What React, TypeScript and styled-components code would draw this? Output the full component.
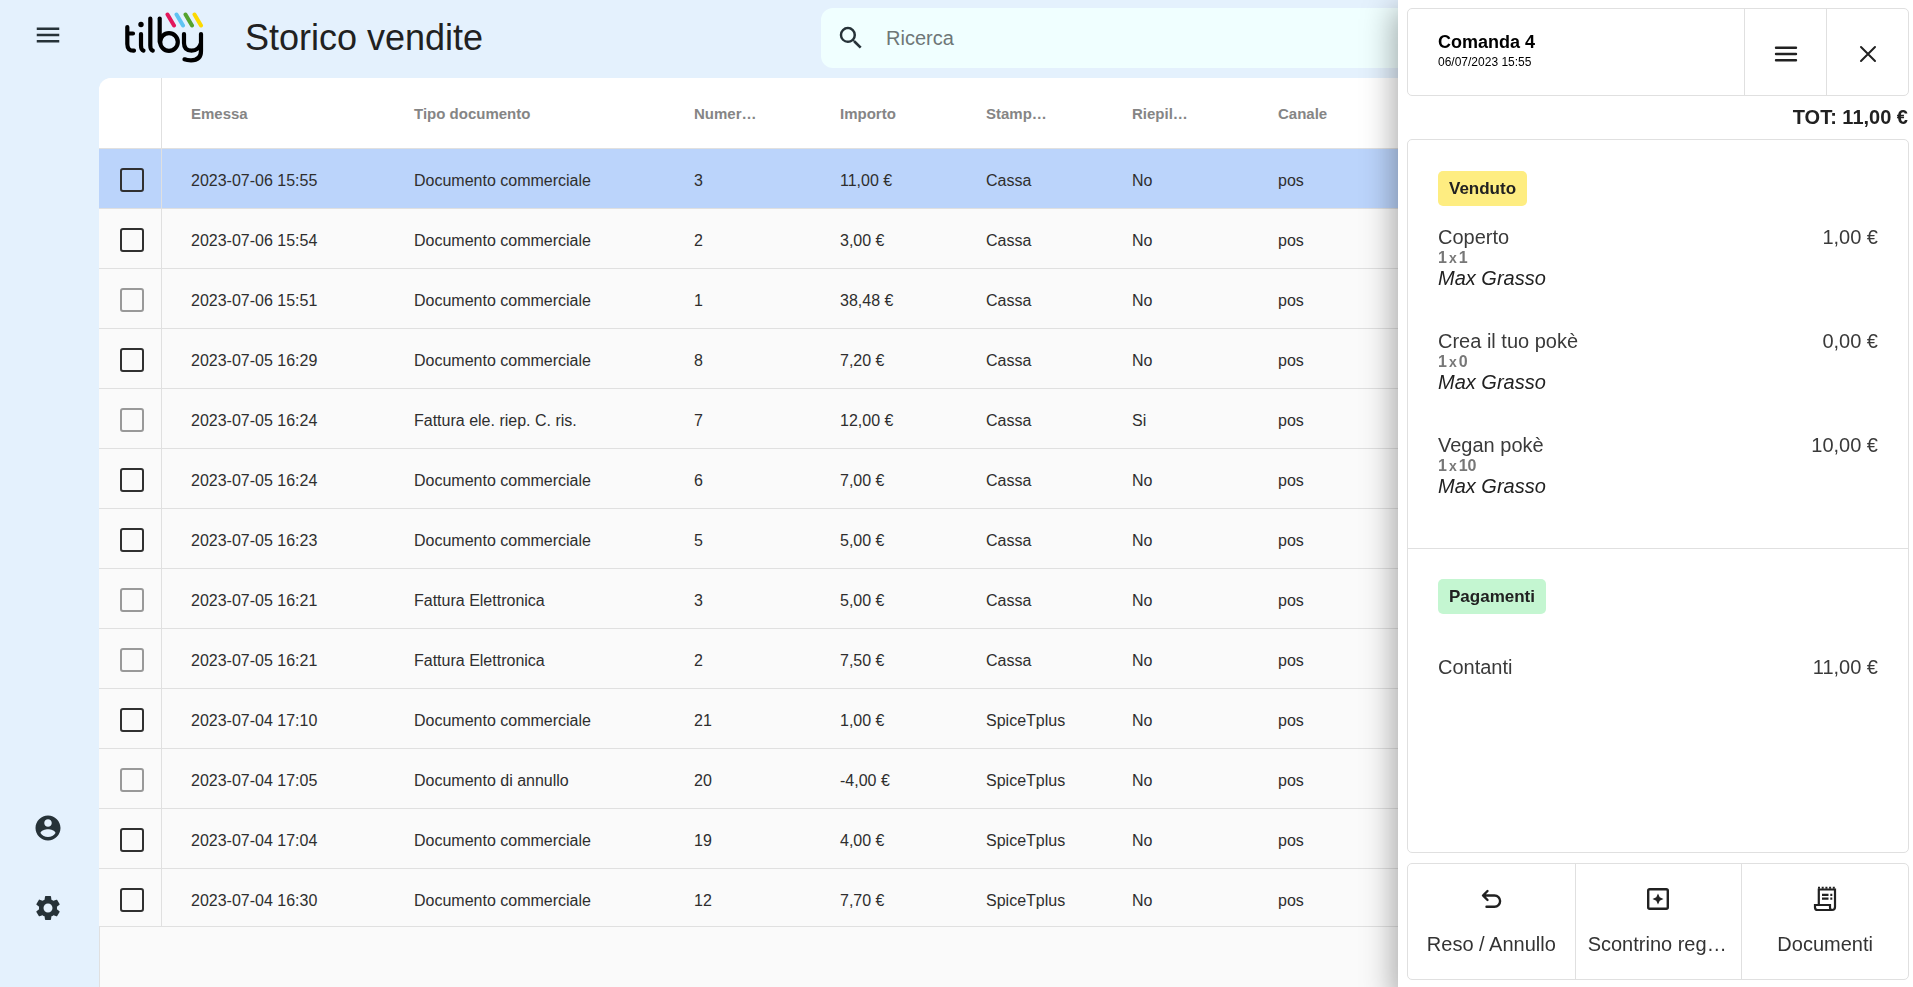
import React from 'react';
import styled, { createGlobalStyle } from 'styled-components';

const Global = createGlobalStyle`
  *, *::before, *::after { box-sizing: border-box; }
  body { margin: 0; background: #e4f1fd; color: #212121; }
  body, button, input { font-family: "Liberation Sans", Arial, sans-serif; }
`;

const Page = styled.div`
  display: grid;
  grid-template-columns: 99px minmax(0, 1fr);
  height: 100vh;
  overflow: hidden;
`;

const Sidebar = styled.nav`
  display: flex;
  flex-direction: column;
  align-items: center;
  padding: 15px 3px 59px 0;
  gap: 40px;
`;

const IconButton = styled.button`
  display: flex;
  align-items: center;
  justify-content: center;
  width: 40px;
  height: 40px;
  padding: 0;
  border: 0;
  background: none;
  color: #263238;
  cursor: pointer;
`;

const Spacer = styled.div`
  flex: 1;
`;

const Main = styled.main`
  display: flex;
  flex-direction: column;
  min-width: 0;
`;

const TopBar = styled.header`
  display: flex;
  align-items: center;
  flex: none;
  height: 78px;
  padding: 0 24px;
`;

const Title = styled.h1`
  flex: none;
  width: 577px;
  margin: 0 0 2px;
  padding-left: 1px;
  font-size: 36px;
  font-weight: 400;
  line-height: 44px;
`;

const Search = styled.label`
  display: flex;
  align-items: center;
  flex: 1;
  height: 60px;
  margin-bottom: 2px;
  padding: 0 16px 0 15px;
  gap: 20px;
  border-radius: 12px;
  background: #f0ffff;
  color: #263238;
`;

const SearchInput = styled.input`
  flex: 1;
  min-width: 0;
  padding: 0;
  border: 0;
  outline: 0;
  background: none;
  font-size: 20px;
  line-height: 24px;
  &::placeholder { color: #6e7777; opacity: 1; }
`;

const TableArea = styled.section`
  display: flex;
  flex-direction: column;
  flex: 1;
  min-height: 0;
  overflow: hidden;
  border-top-left-radius: 12px;
  background: #fafafa;
`;

const TableRest = styled.div`
  flex: 1;
  border-left: 1px solid #e0e0e0;
`;

const Table = styled.table`
  width: 100%;
  border-collapse: separate;
  border-spacing: 0;
  table-layout: fixed;
`;

const HeadCell = styled.th<{ $w?: number }>`
  width: ${(p) => (p.$w ? `${p.$w}px` : 'auto')};
  height: 71px;
  padding: 0 53px 0 29px;
  overflow: hidden;
  border-bottom: 1px solid #e0e0e0;
  background: #fff;
  color: #858585;
  font-size: 15px;
  font-weight: 700;
  text-align: left;
  text-overflow: ellipsis;
  white-space: nowrap;
`;

const CheckHead = styled(HeadCell)`
  padding: 0;
  border-right: 1px solid #e0e0e0;
`;

const Row = styled.tr<{ $selected?: boolean }>`
  background: ${(p) => (p.$selected ? '#bbd4fb' : '#fafafa')};
`;

const Cell = styled.td`
  height: 60px;
  padding: 4px 0 0 29px;
  border-bottom: 1px solid #e0e0e0;
  color: #2e2e2e;
  font-size: 16px;
  line-height: 20px;
  white-space: nowrap;
  tr:last-child > & { height: 58px; padding-top: 6px; }
`;

const CheckCell = styled(Cell)`
  padding: 2px 0 0 21px;
  border-right: 1px solid #e0e0e0;
  tr:last-child > && { padding-top: 4px; }
`;

const Checkbox = styled.input`
  display: block;
  appearance: none;
  width: 24px;
  height: 24px;
  margin: 0;
  border: 2px solid #303030;
  border-radius: 3px;
  &:disabled { border-color: #999; }
`;

const Drawer = styled.aside`
  position: fixed;
  top: 0;
  right: 0;
  bottom: 0;
  display: flex;
  flex-direction: column;
  width: 515px;
  padding: 8px 4px 7px 9px;
  background: #fff;
  box-shadow: 0 12px 30px 4px rgba(0, 0, 0, 0.34);
`;

const Panel = styled.div`
  border: 1px solid #e0e0e0;
  border-radius: 5px;
`;

const OrderHeader = styled(Panel)`
  display: grid;
  grid-template-columns: minmax(0, 1fr) 82px 82px;
  flex: none;
  height: 88px;
`;

const OrderInfo = styled.div`
  padding: 23px 30px;
  color: #000;
`;

const OrderName = styled.h2`
  margin: 0;
  font-size: 18px;
  line-height: 20px;
`;

const OrderDate = styled.div`
  font-size: 12px;
  line-height: 20px;
`;

const HeaderButton = styled(IconButton)`
  width: auto;
  height: auto;
  padding-top: 4px;
  border-left: 1px solid #e0e0e0;
  color: #212121;
`;

const Total = styled.div`
  padding: 9px 1px 10px 0;
  font-size: 20px;
  font-weight: 700;
  line-height: 24px;
  text-align: right;
`;

const Details = styled(Panel)`
  flex: 1;
  min-height: 0;
  overflow: hidden;
`;

const Section = styled.section`
  padding: 31px 30px 52px;
  & + & { border-top: 1px solid #e0e0e0; padding-top: 30px; }
`;

const Tag = styled.h3<{ $color: string }>`
  width: max-content;
  margin: 0;
  padding: 0 11px;
  border-radius: 5px;
  background: ${(p) => p.$color};
  font-size: 17px;
  line-height: 35px;
`;

const Line = styled.div<{ $gap: number }>`
  display: flex;
  justify-content: space-between;
  margin-top: ${(p) => p.$gap}px;
  font-size: 20px;
  line-height: 22px;
  color: #3a3a3a;
`;

const Quantity = styled.div`
  color: #777;
  font-size: 16px;
  font-weight: 700;
  line-height: 20px;
  small { margin: 0 2px; font-size: 14px; }
`;

const Seller = styled.em`
  display: block;
  color: #212121;
  line-height: 20px;
`;

const Actions = styled(Panel)`
  display: grid;
  grid-template-columns: repeat(3, minmax(0, 1fr));
  flex: none;
  height: 117px;
  margin-top: 10px;
`;

const Action = styled.button`
  display: flex;
  flex-direction: column;
  align-items: center;
  gap: 16px;
  padding: 20px 12px 0;
  border: 0;
  background: none;
  color: #212121;
  font-size: 20px;
  line-height: 28px;
  cursor: pointer;
  & + & { border-left: 1px solid #e0e0e0; }
  svg { flex: none; }
  span {
    max-width: 100%;
    overflow: hidden;
    color: #333;
    text-overflow: ellipsis;
    white-space: nowrap;
  }
`;

const paths = {
  menu: 'M3 18h18v-2H3v2zm0-5h18v-2H3v2zm0-7v2h18V6H3z',
  search:
    'M15.5 14h-.79l-.28-.27A6.47 6.47 0 0 0 16 9.5 6.5 6.5 0 1 0 9.5 16c1.61 0 3.09-.59 4.23-1.57l.27.28v.79l5 4.99L20.49 19l-4.99-5zm-6 0C7.01 14 5 11.99 5 9.5S7.01 5 9.5 5 14 7.01 14 9.5 11.99 14 9.5 14z',
  account:
    'M12 2C6.48 2 2 6.48 2 12s4.48 10 10 10 10-4.48 10-10S17.52 2 12 2zm0 3c1.66 0 3 1.34 3 3s-1.34 3-3 3-3-1.34-3-3 1.34-3 3-3zm0 14.2c-2.5 0-4.71-1.28-6-3.22.03-1.99 4-3.08 6-3.08 1.99 0 5.97 1.09 6 3.08-1.29 1.94-3.5 3.22-6 3.22z',
  settings:
    'M19.14 12.94c.04-.3.06-.61.06-.94 0-.32-.02-.64-.07-.94l2.03-1.58c.18-.14.23-.41.12-.61l-1.92-3.32c-.12-.22-.37-.29-.59-.22l-2.39.96c-.5-.38-1.03-.7-1.62-.94l-.36-2.54c-.04-.24-.24-.41-.48-.41h-3.84c-.24 0-.43.17-.47.41l-.36 2.54c-.59.24-1.13.57-1.62.94l-2.39-.96c-.22-.08-.47 0-.59.22L2.74 8.87c-.12.21-.08.47.12.61l2.03 1.58c-.05.3-.09.63-.09.94s.02.64.07.94l-2.03 1.58c-.18.14-.23.41-.12.61l1.92 3.32c.12.22.37.29.59.22l2.39-.96c.5.38 1.03.7 1.62.94l.36 2.54c.05.24.24.41.48.41h3.84c.24 0 .44-.17.47-.41l.36-2.54c.59-.24 1.13-.56 1.62-.94l2.39.96c.22.08.47 0 .59-.22l1.92-3.32c.12-.22.07-.47-.12-.61l-2.01-1.58zM12 15.6c-1.98 0-3.6-1.62-3.6-3.6s1.62-3.6 3.6-3.6 3.6 1.62 3.6 3.6-1.62 3.6-3.6 3.6z',
};

const Icon = ({ name, size }: { name: keyof typeof paths; size: number }) => (
  <svg width={size} height={size} viewBox="0 0 24 24" fill="currentColor" aria-hidden="true">
    <path d={paths[name]} />
  </svg>
);

const LogoSvg = styled.svg`
  flex: none;
  margin-right: 39px;
`;

const Logo = () => (
  <LogoSvg width="82" height="54" viewBox="0 0 82 54" fill="none" strokeLinecap="round" role="img" aria-label="tilby">
    <g stroke="#000" strokeWidth="4.2" strokeLinejoin="round">
      <path d="M4.300 15V32Q4.300 39 11 38.600M4.300 21.500H10" />
      <path d="M18 22V33.500Q18 38 20.500 38.600" />
      <path d="M27.300 6.500V33.500Q27.300 38 29.800 38.600" />
      <path d="M36.700 6.500V30" />
      <circle cx="46" cy="30" r="8.800" />
      <path d="M61 22V31Q61 38.600 68.500 38.600T78 31V22M78 31V39Q78 48.300 68 48.300Q64 48.300 61.500 47.300" />
    </g>
    <circle cx="18" cy="12.500" r="2.700" fill="#000" />
    <g strokeWidth="4">
      <path d="M44.500 2.500L51 13.500" stroke="#e2175b" />
      <path d="M53.500 2.500L60 13.500" stroke="#5fc4f2" />
      <path d="M62.500 2.500L69 13.500" stroke="#55a32c" />
      <path d="M71.500 2.500L78 13.500" stroke="#fcd900" />
    </g>
  </LogoSvg>
);

type Sale = [string, string, string, string, string, string, boolean];

const D = 'Documento commerciale';
const sales: Sale[] = [
  ['2023-07-06 15:55', D, '3', '11,00 €', 'Cassa', 'No', true],
  ['2023-07-06 15:54', D, '2', '3,00 €', 'Cassa', 'No', true],
  ['2023-07-06 15:51', D, '1', '38,48 €', 'Cassa', 'No', false],
  ['2023-07-05 16:29', D, '8', '7,20 €', 'Cassa', 'No', true],
  ['2023-07-05 16:24', 'Fattura ele. riep. C. ris.', '7', '12,00 €', 'Cassa', 'Si', false],
  ['2023-07-05 16:24', D, '6', '7,00 €', 'Cassa', 'No', true],
  ['2023-07-05 16:23', D, '5', '5,00 €', 'Cassa', 'No', true],
  ['2023-07-05 16:21', 'Fattura Elettronica', '3', '5,00 €', 'Cassa', 'No', false],
  ['2023-07-05 16:21', 'Fattura Elettronica', '2', '7,50 €', 'Cassa', 'No', false],
  ['2023-07-04 17:10', D, '21', '1,00 €', 'SpiceTplus', 'No', true],
  ['2023-07-04 17:05', 'Documento di annullo', '20', '-4,00 €', 'SpiceTplus', 'No', false],
  ['2023-07-04 17:04', D, '19', '4,00 €', 'SpiceTplus', 'No', true],
  ['2023-07-04 16:30', D, '12', '7,70 €', 'SpiceTplus', 'No', true],
];

const columns: [string, number | undefined][] = [
  ['Emessa', 223],
  ['Tipo documento', 280],
  ['Numero documento', 146],
  ['Importo', 146],
  ['Stampante', 146],
  ['Riepilogativa', 146],
  ['Canale', undefined],
];

const items = [
  { name: 'Coperto', price: '1,00 €', qty: '1' },
  { name: 'Crea il tuo pokè', price: '0,00 €', qty: '0' },
  { name: 'Vegan pokè', price: '10,00 €', qty: '10' },
];

export default function App() {
  return (
    <>
      <Global />
      <Page>
        <Sidebar>
          <IconButton aria-label="Menu"><Icon name="menu" size={30} /></IconButton>
          <Spacer />
          <IconButton aria-label="Account"><Icon name="account" size={30} /></IconButton>
          <IconButton aria-label="Impostazioni"><Icon name="settings" size={30} /></IconButton>
        </Sidebar>
        <Main>
          <TopBar>
            <Logo />
            <Title>Storico vendite</Title>
            <Search>
              <Icon name="search" size={30} />
              <SearchInput type="search" placeholder="Ricerca" aria-label="Ricerca" />
            </Search>
          </TopBar>
          <TableArea>
            <Table>
              <thead>
                <tr>
                  <CheckHead $w={63} aria-label="Seleziona" />
                  {columns.map(([label, w]) => <HeadCell key={label} $w={w}>{label}</HeadCell>)}
                </tr>
              </thead>
              <tbody>
                {sales.map(([date, type, num, amount, printer, summary, enabled], i) => (
                  <Row key={i} $selected={i === 0}>
                    <CheckCell>
                      <Checkbox type="checkbox" disabled={!enabled} aria-label={`Seleziona ${type} ${num}`} />
                    </CheckCell>
                    <Cell>{date}</Cell>
                    <Cell>{type}</Cell>
                    <Cell>{num}</Cell>
                    <Cell>{amount}</Cell>
                    <Cell>{printer}</Cell>
                    <Cell>{summary}</Cell>
                    <Cell>pos</Cell>
                  </Row>
                ))}
              </tbody>
            </Table>
            <TableRest />
          </TableArea>
        </Main>
      </Page>
      <Drawer>
        <OrderHeader>
          <OrderInfo>
            <OrderName>Comanda 4</OrderName>
            <OrderDate>06/07/2023 15:55</OrderDate>
          </OrderInfo>
          <HeaderButton aria-label="Opzioni">
            <svg width="24" height="18" viewBox="0 0 24 18" stroke="currentColor" strokeWidth="2.400" strokeLinecap="round">
              <path d="M2 2.700H22M2 9H22M2 15.300H22" />
            </svg>
          </HeaderButton>
          <HeaderButton aria-label="Chiudi">
            <svg width="18" height="18" viewBox="0 0 18 18" stroke="currentColor" strokeWidth="2" strokeLinecap="round">
              <path d="M2 2L16 16M16 2L2 16" />
            </svg>
          </HeaderButton>
        </OrderHeader>
        <Total>TOT: 11,00 €</Total>
        <Details>
          <Section>
            <Tag $color="#feed81">Venduto</Tag>
            {items.map((item, i) => (
              <Line key={item.name} $gap={i === 0 ? 20 : 42}>
                <div>
                  {item.name}
                  <Quantity>1<small>x</small>{item.qty}</Quantity>
                  <Seller>Max Grasso</Seller>
                </div>
                <span>{item.price}</span>
              </Line>
            ))}
          </Section>
          <Section>
            <Tag $color="#c4f6d1">Pagamenti</Tag>
            <Line $gap={42}>
              <span>Contanti</span>
              <span>11,00 €</span>
            </Line>
          </Section>
        </Details>
        <Actions>
          <Action>
            <svg width="30" height="30" viewBox="0 0 30 30" fill="none" stroke="currentColor" strokeWidth="2.400" strokeLinecap="round" strokeLinejoin="round">
              <path d="M11.500 7L7 11.500L11.500 16M7.500 11.500H18.500A5.600 5.600 0 0 1 18.500 22.700H10.500" />
            </svg>
            <span>Reso / Annullo</span>
          </Action>
          <Action>
            <svg width="30" height="30" viewBox="0 0 30 30" fill="none" stroke="currentColor" strokeWidth="2.400">
              <rect x="5.200" y="5.200" width="19.600" height="19.600" rx="1.500" />
              <path d="M15 9.500L16.700 13.300L20.500 15L16.700 16.700L15 20.500L13.300 16.700L9.500 15L13.300 13.300Z" fill="currentColor" stroke="none" />
            </svg>
            <span>Scontrino regalo</span>
          </Action>
          <Action>
            <svg width="30" height="30" viewBox="0 0 30 30" fill="none" stroke="currentColor" strokeWidth="2.200">
              <path d="M8.800 21V5.500H25V23Q25 26 22 26H7.500Q5 26 5 23.500V21H20V23.500Q20 26 22 26" />
              <path d="M8 3.700H26" strokeWidth="2" strokeDasharray="2 1.700" />
              <path d="M12 10.800H18.500M12 14.600H18.500M20.300 10.800H22.300M20.300 14.600H22.300" />
            </svg>
            <span>Documenti</span>
          </Action>
        </Actions>
      </Drawer>
    </>
  );
}
